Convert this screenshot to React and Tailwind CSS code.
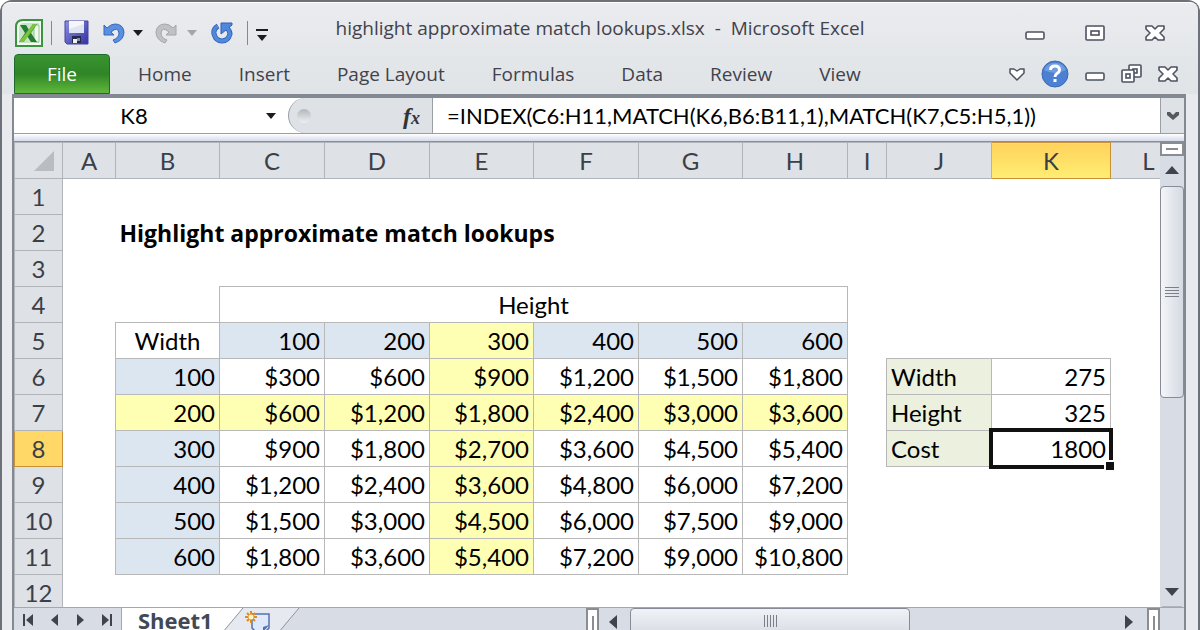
import React, { useState } from 'react';

const columns = [
  { name: 'A', width: 'w-[53px]' },
  { name: 'B', width: 'w-[104px]' },
  { name: 'C', width: 'w-[105px]' },
  { name: 'D', width: 'w-[105px]' },
  { name: 'E', width: 'w-[104px]' },
  { name: 'F', width: 'w-[105px]' },
  { name: 'G', width: 'w-[104px]' },
  { name: 'H', width: 'w-[105px]' },
  { name: 'I', width: 'w-[39px]' },
  { name: 'J', width: 'w-[105px]' },
  { name: 'K', width: 'w-[119px]' },
  { name: 'L', width: '' },
];

const rows = [1, 2, 3, 4, 5, 6, 7, 8, 9, 10, 11, 12];

const cells = {
  B5: 'Width', C5: '100', D5: '200', E5: '300', F5: '400', G5: '500', H5: '600',
  B6: '100', C6: '$300', D6: '$600', E6: '$900', F6: '$1,200', G6: '$1,500', H6: '$1,800',
  B7: '200', C7: '$600', D7: '$1,200', E7: '$1,800', F7: '$2,400', G7: '$3,000', H7: '$3,600',
  B8: '300', C8: '$900', D8: '$1,800', E8: '$2,700', F8: '$3,600', G8: '$4,500', H8: '$5,400',
  B9: '400', C9: '$1,200', D9: '$2,400', E9: '$3,600', F9: '$4,800', G9: '$6,000', H9: '$7,200',
  B10: '500', C10: '$1,500', D10: '$3,000', E10: '$4,500', F10: '$6,000', G10: '$7,500', H10: '$9,000',
  B11: '600', C11: '$1,800', D11: '$3,600', E11: '$5,400', F11: '$7,200', G11: '$9,000', H11: '$10,800',
  J6: 'Width', K6: '275',
  J7: 'Height', K7: '325',
  J8: 'Cost', K8: '1800',
};

const menuTabs = ['Home', 'Insert', 'Page Layout', 'Formulas', 'Data', 'Review', 'View'];

const SELECTED = 'K8';

const cellStyle = (col, row) => {
  const inPrices = col >= 'B' && col <= 'H' && row >= 5 && row <= 11;
  const inLookup = (col === 'J' || col === 'K') && row >= 6 && row <= 8;
  if (!inPrices && !inLookup) return '';

  let style = 'border border-[#b8b8b8] ';
  if (inLookup) {
    return style + (col === 'J' ? 'bg-[#ebf1de] text-left' : 'text-right');
  }
  if (col === 'B' && row === 5) return style + 'text-center';
  if (row === 7 || col === 'E') {
    style += 'bg-[#ffffb3] ';
  } else if (row === 5 || col === 'B') {
    style += 'bg-[#dce6f1] ';
  }
  return style + 'text-right';
};

const ExcelLogo = () => (
  <svg width="28" height="28" viewBox="0 0 28 28">
    <path d="M8 1H27V27H1V8Q1 1 8 1Z" fill="#f5faf4" stroke="#3c9440" strokeWidth="2" />
    <path d="M4 24V9q0-5 5-5h15v20z" fill="#c6e5c5" />
    <path d="M19 6h5v17h-5z" fill="#eff8ee" stroke="#8cc68e" />
    <path d="M5 6h6l3 5 4-6h4l-6 9 6 9h-6l-4-6-4 6H4l6-9z" fill="#247c35" />
    <path d="M18 5h4L9 23H4z" fill="#7cc33e" />
  </svg>
);

const SaveIcon = () => (
  <svg width="25" height="25" viewBox="0 0 25 25">
    <defs>
      <linearGradient id="disk" x1="0" y1="0" x2="1" y2="1">
        <stop offset="0" stopColor="#8d91e2" />
        <stop offset="1" stopColor="#3531a0" />
      </linearGradient>
    </defs>
    <path d="M1 1h23v23H3l-2-2z" fill="url(#disk)" stroke="#4442a6" />
    <path d="M5 1h15v12H5z" fill="#f4f6fc" />
    <path d="M5 9l15-5v9H5z" fill="#dfe4f3" />
    <path d="M8 16h9v7H8z" fill="#26294f" />
    <path d="M9 19h4v4H9z" fill="#f2f2f2" />
    <path d="M13 18h3v3h-3z" fill="#87909e" />
  </svg>
);

const UndoIcon = ({ color, edge, flip }) => (
  <svg width="22" height="22" viewBox="0 0 22 22" className={flip ? '-scale-x-100' : ''}>
    <path
      d="M1 3v10h10l-3-3q7-6 8 1 0 5-6 7l2 3q9-3 9-11-1-8-9-8-4 0-8 4z"
      fill={color}
      stroke={edge}
      strokeLinejoin="round"
    />
  </svg>
);

const RepeatIcon = () => (
  <svg width="22" height="22" viewBox="0 0 22 22">
    <path d="M7 4Q2 7 3 12q2 7 8 7t8-7q0-3-3-6" fill="none" stroke="#2c5fb8" strokeWidth="5" />
    <path d="M10 1h11v2L10 12z" fill="#5088dc" stroke="#2c5fb8" strokeLinejoin="round" />
    <path d="M7 4Q2 7 3 12q2 7 8 7t8-7q0-3-3-6" fill="none" stroke="#5088dc" strokeWidth="3.5" />
  </svg>
);

const Caret = ({ color = '#1c1c1c' }) => (
  <svg width="10" height="6" viewBox="0 0 10 6">
    <path d="M0 0h10L5 6z" fill={color} />
  </svg>
);

const MinimizeIcon = () => (
  <svg width="20" height="20" viewBox="0 0 20 20">
    <rect x="1" y="9" width="18" height="7" rx="1.5" fill="#fff" stroke="#4e5261" strokeWidth="1.6" />
  </svg>
);

const MaximizeIcon = () => (
  <svg width="20" height="20" viewBox="0 0 20 20">
    <rect x="1" y="3" width="18" height="14" rx="1" fill="#fff" stroke="#4e5261" strokeWidth="1.6" />
    <rect x="6" y="8" width="8" height="4" fill="#fff" stroke="#4e5261" strokeWidth="1.6" />
  </svg>
);

const RestoreIcon = () => (
  <svg width="21" height="20" viewBox="0 0 21 20" fill="#fff" stroke="#4e5261" strokeWidth="1.6">
    <rect x="8" y="1" width="12" height="12" rx="1" />
    <rect x="12" y="5" width="4" height="4" />
    <rect x="1" y="6" width="12" height="12" rx="1" />
    <rect x="5" y="10" width="4" height="4" />
  </svg>
);

const CloseIcon = () => (
  <svg width="20" height="20" viewBox="0 0 20 20">
    <path
      d="M1 3h6l3 3 3-3h6v3l-4 4 4 4v3h-6l-3-3-3 3H1v-3l4-4-4-4z"
      fill="#fff"
      stroke="#4e5261"
      strokeWidth="1.6"
      strokeLinejoin="round"
    />
  </svg>
);

const CollapseIcon = () => (
  <svg width="16" height="14" viewBox="0 0 16 14">
    <path
      d="M1 2h4l3 2 3-2h4v4l-7 7-7-7z"
      fill="#fff"
      stroke="#4e5261"
      strokeWidth="1.5"
      strokeLinejoin="round"
    />
  </svg>
);

const HelpIcon = () => (
  <svg width="28" height="28" viewBox="0 0 28 28">
    <circle cx="14" cy="14" r="13" fill="#4b80d2" stroke="#3a69b6" />
    <path d="M3 10a12 12 0 0 1 22 0q-11 6-22 0z" fill="#6f9be0" />
    <path d="M9.500 10q0-4 4.500-4t4.500 4q0 2-2.500 3.500-2 1.200-2 3.500" fill="none" stroke="#fff" strokeWidth="3" />
    <rect x="12.500" y="19" width="3" height="3" fill="#fff" />
  </svg>
);

const NewSheetIcon = () => (
  <svg width="26" height="24" viewBox="0 0 26 24">
    <path d="M8 4h17v14l-4 4H12l-4-4z" fill="#dfe9fb" stroke="#5571b4" strokeWidth="1.5" />
    <path d="M25 15l-6 7v-5z" fill="#5571b4" />
    <path d="M7 1v12M1 7h12M3 3l8 8M11 3l-8 8" stroke="#e08b1d" strokeWidth="2" />
    <circle cx="7" cy="7" r="2.500" fill="#fff3c4" />
  </svg>
);

const Arrow = ({ d, label }) => (
  <button aria-label={label} className="flex h-5 w-5 items-center justify-center">
    <svg width="14" height="14" viewBox="0 0 14 14">
      <path d={d} fill="#40444a" />
    </svg>
  </button>
);

const QuickAccess = () => (
  <div className="flex items-center">
    <ExcelLogo />
    <span className="mx-2 h-6 w-px bg-[#85888f]" />
    <button aria-label="Save" className="ml-1"><SaveIcon /></button>
    <button aria-label="Undo" className="ml-3.5"><UndoIcon color="#5b8fdf" edge="#3568bd" /></button>
    <button aria-label="Undo history" className="ml-2"><Caret /></button>
    <button aria-label="Redo" className="ml-3"><UndoIcon color="#c0c1c4" edge="#a5a6aa" flip /></button>
    <button aria-label="Redo history" className="ml-2.5"><Caret color="#a5a6aa" /></button>
    <button aria-label="Repeat" className="ml-3.5"><RepeatIcon /></button>
    <span className="mr-2 ml-3.5 h-6 w-px bg-[#85888f]" />
    <button aria-label="Customize toolbar" className="flex flex-col items-center gap-1 pt-1">
      <span className="h-0.5 w-3 bg-[#1c1c1c]" />
      <Caret />
    </button>
  </div>
);

const Sheet = () => (
  <table className="w-full min-w-[1173px] table-fixed border-collapse font-[Lato,sans-serif] text-2xl leading-8 text-black">
    <colgroup>
      <col className="w-12" />
      {columns.map((c) => <col key={c.name} className={c.width} />)}
    </colgroup>
    <thead>
      <tr className="h-9 bg-[#dee1e6] text-[#3b3f48]">
        <th className="border border-[#b1b5ba] p-0">
          <svg width="20" height="20" viewBox="0 0 20 20" className="ml-auto mr-2">
            <path d="M20 0v20H0z" fill="#b9bdc1" />
          </svg>
        </th>
        {columns.map((c) => (
          <th
            key={c.name}
            className={
              c.name === 'K'
                ? 'border border-[#c89138] bg-linear-to-b from-[#ffd25c] to-[#ffee72] p-0 font-normal'
                : 'border border-[#b1b5ba] p-0 font-normal'
            }
          >
            {c.name}
          </th>
        ))}
      </tr>
    </thead>
    <tbody>
      {rows.map((row) => (
        <tr key={row} className="h-9">
          <th
            className={
              row === 8
                ? 'border border-[#c89138] bg-[#ffd867] p-0 font-normal text-[#3b3f48]'
                : 'border border-[#b1b5ba] bg-[#dee1e6] p-0 font-normal text-[#3b3f48]'
            }
          >
            {row}
          </th>
          {columns.map(({ name }) => {
            // Title runs over the empty cells next to it
            if (row === 2 && name === 'B') {
              return (
                <td key={name} colSpan={7} className="px-1 py-0 font-['Open_Sans',sans-serif] text-[23px] font-bold">
                  Highlight approximate match lookups
                </td>
              );
            }
            if (row === 2 && name > 'B' && name <= 'H') return null;
            if (row === 4 && name === 'C') {
              return (
                <td key={name} colSpan={6} className="border border-[#b8b8b8] p-0 text-center">
                  Height
                </td>
              );
            }
            if (row === 4 && name > 'C' && name <= 'H') return null;

            const id = name + row;
            return (
              <td key={name} className={`relative px-1 py-0 ${cellStyle(name, row)}`}>
                {cells[id]}
                {id === SELECTED && (
                  <>
                    <span className="absolute -inset-[3px] border-4 border-[#111]" />
                    <span className="absolute -bottom-1 -right-1 h-2.5 w-2.5 border-l-2 border-t-2 border-white bg-[#111]" />
                  </>
                )}
              </td>
            );
          })}
        </tr>
      ))}
    </tbody>
  </table>
);

const VerticalScroll = () => (
  <div className="flex w-6 shrink-0 flex-col items-center bg-[#d8dce4]">
    <div className="flex h-3.5 w-full items-center justify-center border-2 border-[#8a8d92] bg-white">
      <span className="h-0.5 w-3 bg-[#8a8d92]" />
    </div>
    <div className="pb-1.5 pt-1">
      <Arrow label="Scroll up" d="M7 3l7 8H0z" />
    </div>
    <div className="flex h-[212px] w-full flex-col items-center justify-center gap-0.5 rounded-sm border border-[#868b97] bg-linear-to-r from-[#f3f5f9] to-[#d5d9e1]">
      <span className="h-px w-3.5 bg-[#7b7f88]" />
      <span className="h-px w-3.5 bg-[#7b7f88]" />
      <span className="h-px w-3.5 bg-[#7b7f88]" />
      <span className="h-px w-3.5 bg-[#7b7f88]" />
    </div>
    <div className="mt-auto border-b border-[#b1b5ba] pb-1">
      <Arrow label="Scroll down" d="M7 11l7-8H0z" />
    </div>
  </div>
);

const SheetBar = () => (
  <div className="flex h-8 shrink-0 items-stretch border-t border-[#a3a8b0] bg-[#d8dce4]">
    <div className="flex w-[108px] items-start justify-between border-r border-[#a3a8b0] px-1 pt-0.5">
      <Arrow label="First sheet" d="M2 1h2v12H2zM12 1v12L5 7z" />
      <Arrow label="Previous sheet" d="M11 1v12L4 7z" />
      <Arrow label="Next sheet" d="M3 1v12l7-6z" />
      <Arrow label="Last sheet" d="M10 1h2v12h-2zM2 1v12l7-6z" />
    </div>
    <button className="flex items-start bg-white pl-4 pr-3 font-['Open_Sans',sans-serif] text-[22px] font-bold leading-6 text-[#424954]">
      Sheet1
    </button>
    <button aria-label="Insert sheet" className="relative flex w-20 items-start justify-center">
      <svg width="80" height="31" viewBox="0 0 80 31" className="absolute inset-0 overflow-visible">
        <path d="M0 0h18L-8 31H0z" fill="#fff" />
        <path d="M18 0H74L48 31H-8z" fill="#e6e9ef" />
        <path d="M18 0L-8 31M74 0L48 31" stroke="#8f949d" />
      </svg>
      <span className="relative mr-4 pt-0.5"><NewSheetIcon /></span>
    </button>
    <div className="flex-1" />
    <div className="flex w-[574px] shrink-0 items-stretch">
      <span className="flex w-[13px] justify-center border-2 border-[#8a8d92] bg-white pt-1.5">
        <span className="h-4 w-0.5 bg-[#8a8d92]" />
      </span>
      <div className="w-[31px] pl-1 pt-1"><Arrow label="Scroll left" d="M11 0v14L3 7z" /></div>
      <div className="flex w-[280px] items-start justify-center gap-0.5 rounded-sm border border-[#868b97] bg-linear-to-b from-[#f0f2f7] to-[#d5d9e1] pt-1.5">
        <span className="h-3 w-px bg-[#7b7f88]" />
        <span className="h-3 w-px bg-[#7b7f88]" />
        <span className="h-3 w-px bg-[#7b7f88]" />
        <span className="h-3 w-px bg-[#7b7f88]" />
        <span className="h-3 w-px bg-[#7b7f88]" />
      </div>
      <div className="ml-auto pr-2 pt-1"><Arrow label="Scroll right" d="M3 0v14l8-7z" /></div>
      <span className="flex w-[13px] justify-center border-2 border-[#8a8d92] bg-white pt-1.5">
        <span className="h-4 w-0.5 bg-[#8a8d92]" />
      </span>
    </div>
    <div className="w-6 shrink-0" />
  </div>
);

const App = () => {
  const [formula, setFormula] = useState('=INDEX(C6:H11,MATCH(K6,B6:B11,1),MATCH(K7,C5:H5,1))');
  const [nameBox, setNameBox] = useState(SELECTED);

  return (
    <div className="h-screen overflow-hidden bg-white">
      <div className="flex h-full flex-col rounded-t-xl border-x-2 border-t-2 border-[#6c717a] bg-[#e8eaee] font-['Open_Sans',sans-serif]">
        {/* Title bar */}
        <header className="grid h-[52px] shrink-0 grid-cols-[1fr_auto_1fr] items-center rounded-t-lg border-t border-white bg-linear-to-b from-[#ebecef] to-[#e4e7ea] px-[13px] pt-2">
          <QuickAccess />
          <h1 className="mb-2 whitespace-pre text-[19px] text-[#42424c]">
            highlight approximate match lookups.xlsx  -  Microsoft Excel
          </h1>
          <div className="mr-5 flex items-center justify-end gap-10">
            <button aria-label="Minimize"><MinimizeIcon /></button>
            <button aria-label="Maximize"><MaximizeIcon /></button>
            <button aria-label="Close"><CloseIcon /></button>
          </div>
        </header>

        {/* Ribbon tabs */}
        <nav className="flex h-10 shrink-0 items-stretch bg-linear-to-b from-[#e4e7ea] to-[#e0e4e6] pl-3 pr-5 text-[19px] text-[#42424c]">
          <button className="w-24 rounded-t border border-[#1d6a2c] bg-linear-to-b from-[#3a9430] via-[#2f8527] to-[#5fb83b] text-white">
            File
          </button>
          <div className="flex items-center gap-[47px] pl-7">
            {menuTabs.map((tab) => <button key={tab}>{tab}</button>)}
          </div>
          <div className="ml-auto flex items-center gap-4">
            <button aria-label="Collapse ribbon"><CollapseIcon /></button>
            <button aria-label="Help"><HelpIcon /></button>
            <button aria-label="Minimize workbook"><MinimizeIcon /></button>
            <button aria-label="Restore workbook"><RestoreIcon /></button>
            <button aria-label="Close workbook"><CloseIcon /></button>
          </div>
        </nav>

        <main className="mr-3 ml-2.5 flex flex-1 flex-col border-x-2 border-t-4 border-[#828992] bg-white">
          {/* Formula bar */}
          <div className="flex h-9 shrink-0 items-stretch border-b border-[#9a9ea6] font-[Lato,sans-serif] text-[22px] text-black">
            <input
              aria-label="Name box"
              value={nameBox}
              onChange={(e) => setNameBox(e.target.value)}
              className="w-60 bg-white text-center outline-none"
            />
            <button aria-label="Cell names" className="w-[34px] pl-3"><Caret /></button>
            <div className="flex w-[145px] items-center justify-between rounded-l-full border-x border-[#9a9ea6] bg-[#dee1e6] pl-2 pr-3">
              <span className="h-3.5 w-3.5 rounded-full bg-linear-to-b from-[#b4b7bb] to-[#eef0f2]" />
              <button className="font-['Liberation_Serif',serif] text-2xl font-bold italic text-[#333]">
                f<span className="text-lg">x</span>
              </button>
            </div>
            <input
              aria-label="Formula"
              value={formula}
              onChange={(e) => setFormula(e.target.value)}
              className="min-w-0 flex-1 bg-white pl-3.5 outline-none"
            />
            <button aria-label="Expand formula bar" className="flex w-6 items-center justify-center border-l border-[#9a9ea6] bg-[#dee1e6]">
              <svg width="14" height="10" viewBox="0 0 14 10">
                <path d="M1 1h3l3 3 3-3h3v3L7 9 1 4z" fill="#555960" />
              </svg>
            </button>
          </div>
          <div className="h-2 shrink-0 border-b border-[#8a8f98] bg-linear-to-b from-white to-[#d5daea]" />

          <div className="flex min-h-[465px] flex-1 shrink-0">
            <div className="h-[465px] min-w-0 flex-1 overflow-hidden">
              <Sheet />
            </div>
            <VerticalScroll />
          </div>
          <SheetBar />
        </main>
      </div>
    </div>
  );
};

export default App;
